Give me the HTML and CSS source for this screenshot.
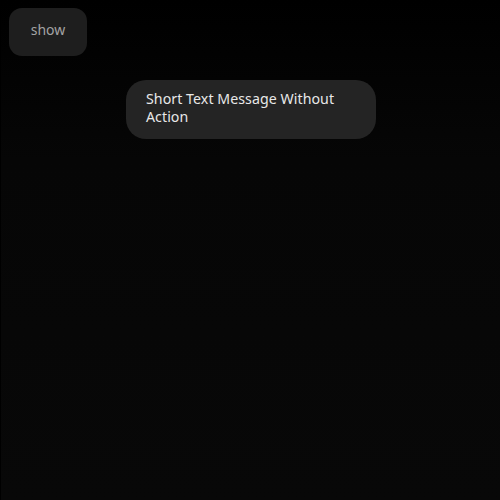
FILE: index.html
```html
<!DOCTYPE html>
<html>
<head>
<meta charset="utf-8">
<link rel="stylesheet" href="styles.css">
</head>
<body>
<div class="page">
  <button class="show-btn">show</button>
  <div class="toast-wrap">
    <div class="toast">Short Text Message Without Action</div>
  </div>
</div>
</body>
</html>
```
FILE: styles.css
```css
html, body {
  margin: 0;
  padding: 0;
  height: 100%;
  background: #070707;
}
.page {
  box-sizing: border-box;
  height: 500px;
  border-left: 1px solid #000;
  background: linear-gradient(#000 0, #060606 160px, #080808 500px);
  padding: 8px 0 0 8px;
  font-family: "Noto Sans", "Open Sans", sans-serif;
}
.show-btn {
  display: block;
  box-sizing: border-box;
  width: 78px;
  height: 48px;
  border: none;
  border-radius: 13px;
  background: #1e1e1e;
  color: #a3a3a3;
  font-family: inherit;
  font-size: 14px;
  padding: 0 0 5px;
  margin: 0;
}
.toast-wrap {
  display: flex;
  padding: 24px 0 0 117px;
}
.toast {
  box-sizing: border-box;
  width: 250px;
  padding: 10px 20px 13px;
  border-radius: 20px;
  background: #242424;
  color: #e8e8e8;
  font-size: 14.2px;
  letter-spacing: 0.05px;
  line-height: 18px;
}
```
